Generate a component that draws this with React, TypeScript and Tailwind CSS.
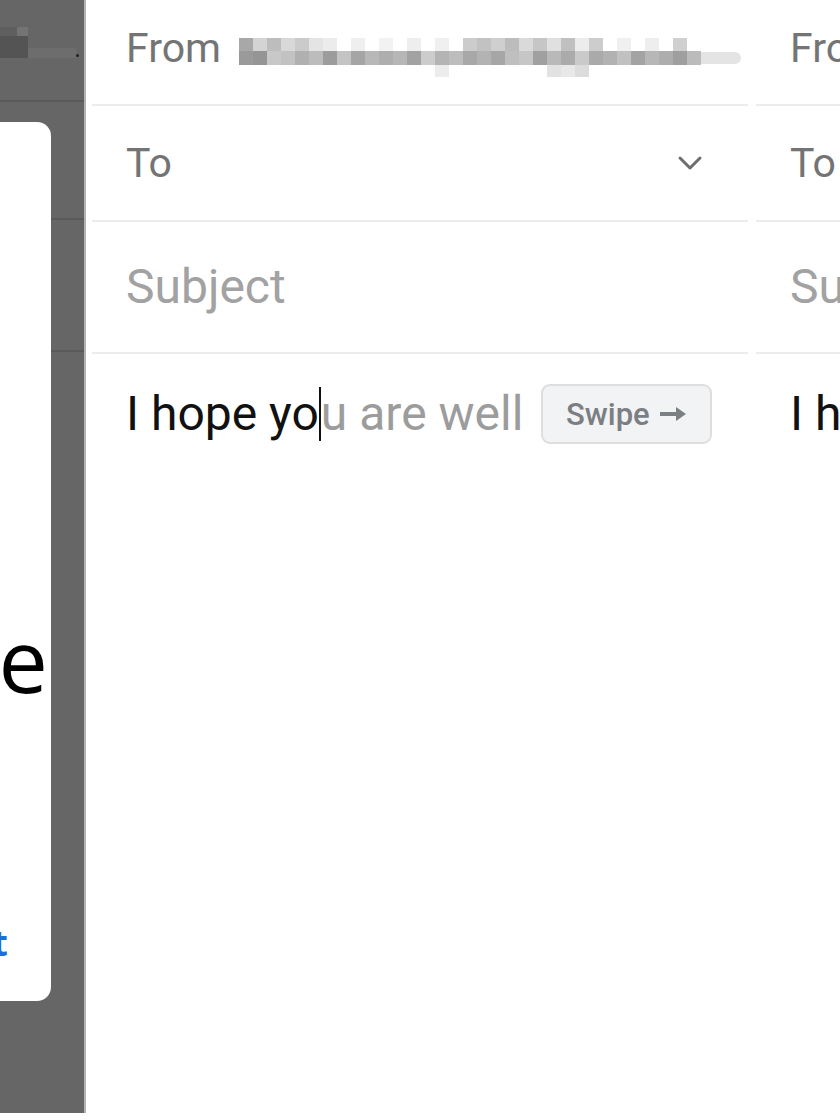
import React from "react";

const topShades = [
  "bg-[#a8a8a8]", "bg-[#d4d4d4]", "bg-[#bdbdbd]", "bg-[#d8d8d8]", "bg-[#cbcbcb]", "bg-[#e4e4e4]",
  "bg-[#ececec]", "bg-[#ffffff]", "bg-[#efefef]", "bg-[#ffffff]", "bg-[#f2f2f2]", "bg-[#ffffff]",
  "bg-[#eeeeee]", "bg-[#ffffff]", "bg-[#f0f0f0]", "bg-[#ffffff]", "bg-[#cccccc]", "bg-[#c2c2c2]",
  "bg-[#cfcfcf]", "bg-[#bcbcbc]", "bg-[#dadada]", "bg-[#c6c6c6]", "bg-[#e0e0e0]", "bg-[#c0c0c0]",
  "bg-[#ececec]", "bg-[#cdcdcd]", "bg-[#ffffff]", "bg-[#f0f0f0]", "bg-[#ffffff]", "bg-[#eeeeee]",
  "bg-[#ffffff]", "bg-[#d0d0d0]", "bg-[#ffffff]",
];
const botShades = [
  "bg-[#9a9a9a]", "bg-[#959595]", "bg-[#c8c8c8]", "bg-[#c2c2c2]", "bg-[#b0b0b0]", "bg-[#bcbcbc]",
  "bg-[#9c9c9c]", "bg-[#c4c4c4]", "bg-[#a5a5a5]", "bg-[#b8b8b8]", "bg-[#aeaeae]", "bg-[#b6b6b6]",
  "bg-[#a2a2a2]", "bg-[#cccccc]", "bg-[#b4b4b4]", "bg-[#bdbdbd]", "bg-[#a8a8a8]", "bg-[#b3b3b3]",
  "bg-[#a6a6a6]", "bg-[#bfbfbf]", "bg-[#c6c6c6]", "bg-[#a0a0a0]", "bg-[#b9b9b9]", "bg-[#ababab]",
  "bg-[#cacaca]", "bg-[#aaaaaa]", "bg-[#b2b2b2]", "bg-[#c1c1c1]", "bg-[#a3a3a3]", "bg-[#b7b7b7]",
  "bg-[#adadad]", "bg-[#9f9f9f]", "bg-[#bbbbbb]",
];
const tailShades = [
  "bg-[#ffffff]", "bg-[#ffffff]", "bg-[#ffffff]", "bg-[#ffffff]", "bg-[#ffffff]", "bg-[#ffffff]",
  "bg-[#ffffff]", "bg-[#ffffff]", "bg-[#ffffff]", "bg-[#ffffff]", "bg-[#ffffff]", "bg-[#ffffff]",
  "bg-[#ffffff]", "bg-[#ffffff]", "bg-[#ececec]", "bg-[#ffffff]", "bg-[#ffffff]", "bg-[#ffffff]",
  "bg-[#ffffff]", "bg-[#ffffff]", "bg-[#ffffff]", "bg-[#ffffff]", "bg-[#e2e2e2]", "bg-[#e8e8e8]",
  "bg-[#dcdcdc]", "bg-[#ffffff]", "bg-[#ffffff]", "bg-[#ffffff]", "bg-[#ffffff]", "bg-[#ffffff]",
  "bg-[#ffffff]", "bg-[#ffffff]", "bg-[#ffffff]",
];

function BlurredAddress() {
  return (
    <div className="flex items-start ml-[18px] mt-[10px]">
      <div className="flex">
        {topShades.map((t, i) => (
          <div key={i} className="flex flex-col w-[14px]">
            <div className={`h-[13px] ${t}`} />
            <div className={`h-[14px] ${botShades[i]}`} />
            <div className={`h-[12px] ${tailShades[i]}`} />
          </div>
        ))}
      </div>
      <div className="w-[40px] h-[12px] mt-[14px] bg-[#e4e4e4] rounded-r-[6px]" />
    </div>
  );
}

function Chevron() {
  return (
    <svg width="26" height="17" viewBox="0 0 26 17" fill="none">
      <path d="M3 3 L13 13 L23 3" stroke="#6e6e6e" strokeWidth="3" strokeLinecap="round" strokeLinejoin="round" />
    </svg>
  );
}

function Arrow() {
  return (
    <svg width="30" height="20" viewBox="0 0 30 20" fill="none">
      <path d="M2 10 H22" stroke="#7b7e83" strokeWidth="4" />
      <path d="M18 3 L28 10 L18 17 Z" fill="#7b7e83" />
    </svg>
  );
}

function Compose({ first }: { first: boolean }) {
  return (
    <div className="flex flex-col">
      <div className="h-[106px] border-b-2 border-[#ececec] flex items-center pl-[34px]">
        <span className="text-[41px] leading-none text-[#747474] -mt-[8px] whitespace-nowrap">From</span>
        {first && <BlurredAddress />}
      </div>
      <div className="h-[116px] border-b-2 border-[#ececec] flex items-center justify-between pl-[34px] pr-[45px]">
        <span className="text-[41px] leading-none text-[#747474]">To</span>
        {first && <Chevron />}
      </div>
      <div className="h-[132px] border-b-2 border-[#ececec] flex items-center pl-[34px]">
        <span className="text-[48px] leading-none text-[#a2a2a2] whitespace-nowrap">Subject</span>
      </div>
      <div className="mt-[30px] h-[60px] pl-[34px] flex items-center">
        <span className="text-[48px] leading-none text-[#111111] whitespace-nowrap">I hope yo</span>
        <span className="inline-block w-[2px] h-[54px] bg-[#111111]" />
        <span className="text-[48px] leading-none text-[#9c9c9c] whitespace-nowrap">u are well</span>
        <div className="ml-[18px] w-[171px] h-[60px] shrink-0 border-2 border-[#dedede] bg-[#f2f3f5] rounded-[9px] flex items-center justify-center gap-[8px]">
          <span className="text-[31px] font-medium text-[#7b7e83] leading-none">Swipe</span>
          <Arrow />
        </div>
      </div>
    </div>
  );
}

export default function App() {
  return (
    <div className="w-[840px] h-[1120px] bg-white flex overflow-hidden font-[Roboto,sans-serif]">
      {/* left backdrop panel */}
      <div className="relative w-[86px] h-[1113px] shrink-0 bg-[#666666] border-r-2 border-[#b3b3b3] flex flex-col">
        <div className="h-[100px] flex flex-col pt-[27px]">
          <div className="flex items-end">
            <div className="flex flex-col">
              <div className="flex">
                <div className="w-[17px] h-[9px] bg-[#5f5f5f]" />
                <div className="w-[11px] h-[9px] bg-[#747474]" />
              </div>
              <div className="w-[28px] h-[22px] bg-[#545454]" />
            </div>
            <div className="w-[48px] h-[10px] bg-[#6d6d6d]" />
            <div className="w-[3px] h-[3px] mb-[1px] bg-[#222222] rounded-full" />
          </div>
        </div>
        <div className="h-[2px] bg-[#5a5a5a]" />
        <div className="h-[116px]" />
        <div className="h-[2px] bg-[#5a5a5a]" />
        <div className="h-[130px]" />
        <div className="h-[2px] bg-[#5a5a5a]" />
        {/* modal sheet peeking from the left */}
        <div className="absolute left-0 top-[122px] w-[51px] h-[879px] bg-white rounded-r-[14px] overflow-hidden flex flex-col items-end">
          <div className="mt-[493px] pr-[3px] text-[88px] leading-none text-black font-['Open_Sans',sans-serif]">e</div>
          <div className="mt-[222px] pr-[43px] text-[36px] leading-none font-bold text-[#1b6fd6] font-['Open_Sans',sans-serif]">t</div>
        </div>
      </div>
      <div className="w-[656px] shrink-0 ml-[6px]">
        <Compose first={true} />
      </div>
      <div className="w-[200px] shrink-0 ml-[8px] overflow-hidden">
        <Compose first={false} />
      </div>
    </div>
  );
}
